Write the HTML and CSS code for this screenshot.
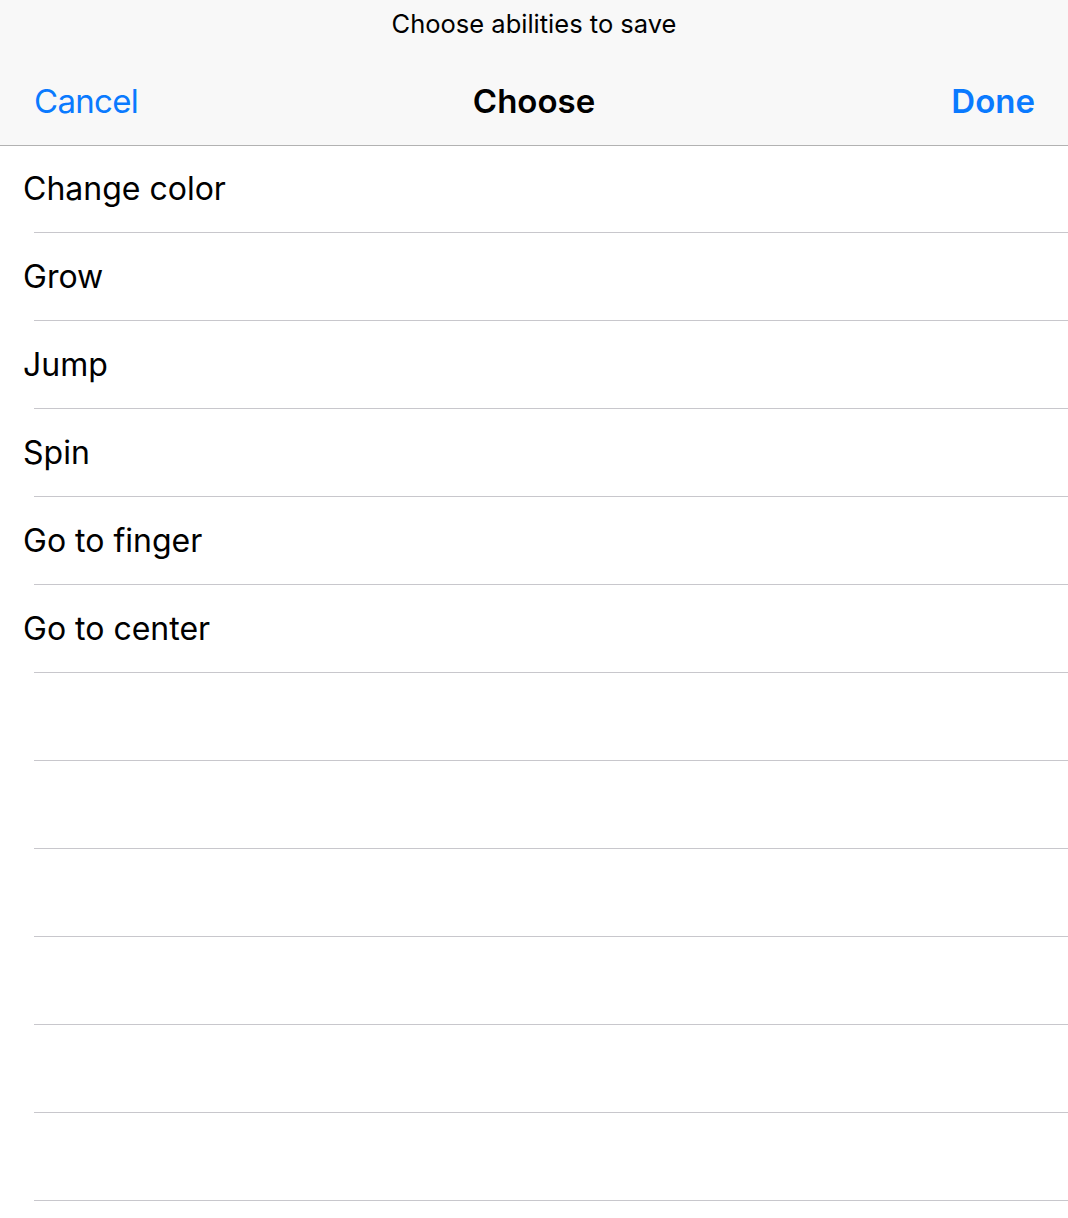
FILE: index.html
```html
<!DOCTYPE html>
<html>
<head>
<meta charset="utf-8">
<link rel="stylesheet" href="styles.css">
</head>
<body>
<header class="header">
  <div class="prompt">Choose abilities to save</div>
  <div class="nav">
    <span class="nav-btn cancel">Cancel</span>
    <span class="nav-title">Choose</span>
    <span class="nav-btn done">Done</span>
  </div>
</header>
<ul class="list">
  <li class="row">Change color</li>
  <li class="row">Grow</li>
  <li class="row">Jump</li>
  <li class="row">Spin</li>
  <li class="row">Go to finger</li>
  <li class="row">Go to center</li>
  <li class="row"></li>
  <li class="row"></li>
  <li class="row"></li>
  <li class="row"></li>
  <li class="row"></li>
  <li class="row"></li>
</ul>
</body>
</html>
```
FILE: styles.css
```css
html, body {
  margin: 0;
  padding: 0;
  background: #ffffff;
  font-family: Inter, "Noto Sans", "Liberation Sans", sans-serif;
  color: #000;
}
.header {
  background: #f8f8f8;
  height: 146px;
  box-sizing: border-box;
  border-bottom: 1px solid #b2b2b2;
  display: flex;
  flex-direction: column;
}
.prompt {
  height: 48px;
  line-height: 48px;
  text-align: center;
  font-size: 25.5px;
  color: #000;
}
.nav {
  flex: 1;
  display: flex;
  align-items: center;
  justify-content: space-between;
  padding: 8px 33px 0 34px;
  position: relative;
}
.nav-btn {
  font-size: 33px;
  color: #0a7aff;
}
.cancel {
  letter-spacing: -0.7px;
}
.done {
  font-weight: 600;
}
.nav-title {
  position: absolute;
  left: 0;
  right: 0;
  text-align: center;
  font-size: 33px;
  font-weight: 600;
}
.list {
  list-style: none;
  margin: 0;
  padding: 0;
}
.row {
  height: 88px;
  box-sizing: border-box;
  display: flex;
  align-items: center;
  padding-left: 23px;
  padding-bottom: 2px;
  font-size: 32px;
  position: relative;
}
.row:first-child {
  height: 87px;
}
.row::after {
  content: "";
  position: absolute;
  left: 34px;
  right: 0;
  bottom: 0;
  height: 1px;
  background: #c8c7cc;
}
```
